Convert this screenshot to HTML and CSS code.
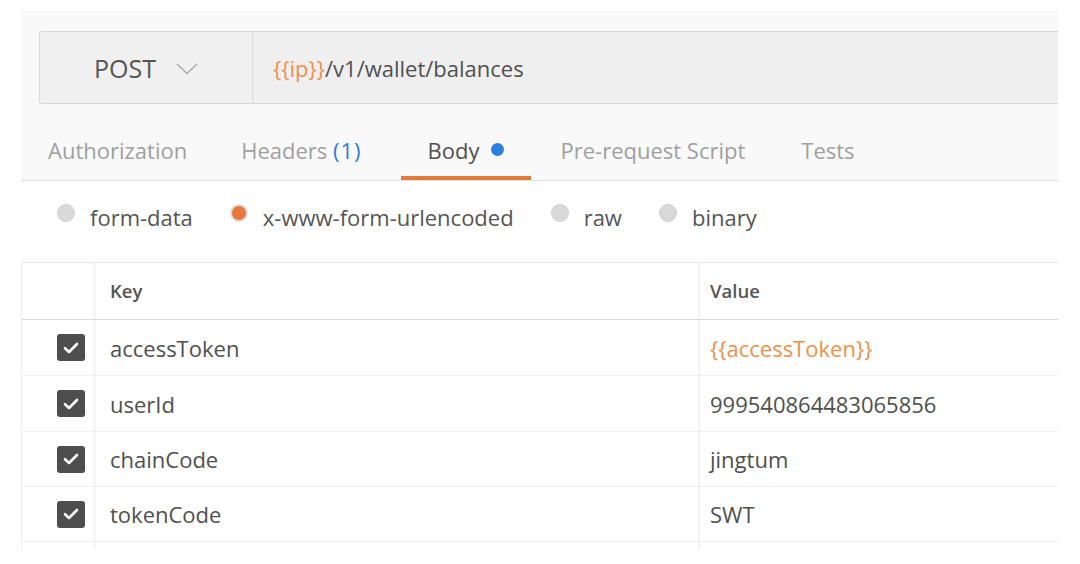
FILE: index.html
```html
<!DOCTYPE html>
<html>
<head>
<meta charset="utf-8">
<link rel="stylesheet" href="styles.css">
</head>
<body>
<div class="panel">
  <div class="head">
    <div class="urlbar">
      <div class="method">
        <span class="method-name">POST</span>
        <svg class="chev" width="22" height="12" viewBox="0 0 22 12"><path d="M1 1 L11 10.5 L21 1" fill="none" stroke="#acacac" stroke-width="1.5"/></svg>
      </div>
      <div class="url"><span class="var">{{ip}}</span>/v1/wallet/balances</div>
    </div>
    <div class="tabs">
      <div class="tab">Authorization</div>
      <div class="tab">Headers&nbsp;<span class="count">(1)</span></div>
      <div class="tab active">Body <span class="dot"></span></div>
      <div class="tab">Pre-request Script</div>
      <div class="tab last">Tests</div>
    </div>
  </div>
  <div class="modes">
    <label class="mode"><span class="radio"></span>form-data</label>
    <label class="mode"><span class="radio on"></span>x-www-form-urlencoded</label>
    <label class="mode"><span class="radio"></span>raw</label>
    <label class="mode"><span class="radio"></span>binary</label>
  </div>
  <div class="table">
    <div class="row header">
      <div class="cell chk"></div>
      <div class="cell key">Key</div>
      <div class="cell val">Value</div>
    </div>
    <div class="row">
      <div class="cell chk"><span class="box"><svg width="16" height="12" viewBox="0 0 16 12"><path d="M2 6.2 L6 10 L14 2" fill="none" stroke="#fff" stroke-width="2.6" stroke-linecap="round" stroke-linejoin="round"/></svg></span></div>
      <div class="cell key">accessToken</div>
      <div class="cell val"><span class="var">{{accessToken}}</span></div>
    </div>
    <div class="row">
      <div class="cell chk"><span class="box"><svg width="16" height="12" viewBox="0 0 16 12"><path d="M2 6.2 L6 10 L14 2" fill="none" stroke="#fff" stroke-width="2.6" stroke-linecap="round" stroke-linejoin="round"/></svg></span></div>
      <div class="cell key">userId</div>
      <div class="cell val">999540864483065856</div>
    </div>
    <div class="row short">
      <div class="cell chk"><span class="box"><svg width="16" height="12" viewBox="0 0 16 12"><path d="M2 6.2 L6 10 L14 2" fill="none" stroke="#fff" stroke-width="2.6" stroke-linecap="round" stroke-linejoin="round"/></svg></span></div>
      <div class="cell key">chainCode</div>
      <div class="cell val">jingtum</div>
    </div>
    <div class="row short">
      <div class="cell chk"><span class="box"><svg width="16" height="12" viewBox="0 0 16 12"><path d="M2 6.2 L6 10 L14 2" fill="none" stroke="#fff" stroke-width="2.6" stroke-linecap="round" stroke-linejoin="round"/></svg></span></div>
      <div class="cell key">tokenCode</div>
      <div class="cell val">SWT</div>
    </div>
    <div class="row tail">
      <div class="cell chk"></div>
      <div class="cell key"></div>
      <div class="cell val"></div>
    </div>
  </div>
</div>
</body>
</html>
```
FILE: styles.css
```css
* { box-sizing: border-box; }
body {
  margin: 0;
  background: #fff;
  font-family: "Open Sans", "Liberation Sans", sans-serif;
  color: #505050;
}
.panel {
  margin: 10px 0 0 21px;
  width: 1037px;
}
.head {
  background: #f9f9f9;
  padding-top: 21px;
}
.urlbar {
  margin-left: 18px;
  height: 73px;
  display: flex;
  border: 1px solid #d8d8d8;
  border-right: none;
  border-radius: 3px 0 0 3px;
  background: #efefef;
}
.method {
  width: 213px;
  display: flex;
  align-items: center;
  justify-content: center;
  gap: 20px;
  border-right: 1px solid #dddddd;
  background: #f0f0f0;
  font-size: 25px;
  color: #555;
}
.chev { margin-top: 2px; }
.url {
  flex: 1;
  display: flex;
  align-items: center;
  padding-left: 20px;
  font-size: 22px;
  color: #505050;
}
.var { color: #f0904a; }
.tabs {
  display: flex;
  padding-top: 21px;
  border-bottom: 1px solid #e0e0e0;
}
.tab {
  height: 55px;
  padding: 0 27px 1px;
  display: flex;
  align-items: center;
  font-size: 22px;
  color: #a0a0a0;
  border-bottom: 4px solid transparent;
}
.tab .count { color: #2f7fd4; letter-spacing: 1px; }
.tab.active {
  color: #505050;
  border-bottom-color: #e47a3e;
  margin-left: 12px;
}
.tab.active + .tab { margin-left: 3px; }
.tab.last { margin-left: 2px; }
.dot {
  display: inline-block;
  width: 13px;
  height: 13px;
  border-radius: 50%;
  background: #2b7ee2;
  margin-left: 11px;
  margin-bottom: 2px;
}
.modes {
  height: 81px;
  display: flex;
  align-items: center;
  gap: 37px;
  padding-left: 36px;
  padding-bottom: 10px;
  font-size: 22px;
  color: #555;
}
.mode {
  display: flex;
  align-items: center;
  gap: 15px;
}
.radio {
  width: 18px;
  height: 18px;
  border-radius: 50%;
  background: #d9d9d9;
  border: 1px solid #d0d0d0;
  margin-bottom: 7px;
}
.radio.on {
  background: #e7773a;
  border: 2px solid #dcdcdc;
}
.table {
  border-top: 1px solid #e6e6e6;
  border-left: 1px solid #f0f0f0;
}
.row {
  display: grid;
  grid-template-columns: 74px 604px 358px;
  height: 56px;
  border-bottom: 1px solid #efefef;
}
.row.short { height: 55px; }
.row.header {
  height: 57px;
  border-bottom: 1px solid #dadada;
}
.row.tail {
  height: 7px;
  border-bottom: none;
}
.cell {
  display: flex;
  align-items: center;
  font-size: 22px;
}
.cell.chk {
  padding-left: 35px;
  border-right: 3px solid #f6f6f6;
}
.cell.key {
  padding-left: 14px;
  border-right: 2px solid #f3f3f3;
}
.cell.val { padding-left: 10px; }
.header .cell {
  font-size: 18.5px;
  font-weight: 600;
  color: #555;
  padding-bottom: 2px;
}
.box {
  width: 28px;
  height: 27px;
  border-radius: 3px;
  background: #4e4e4e;
  display: flex;
  align-items: center;
  justify-content: center;
}
```
